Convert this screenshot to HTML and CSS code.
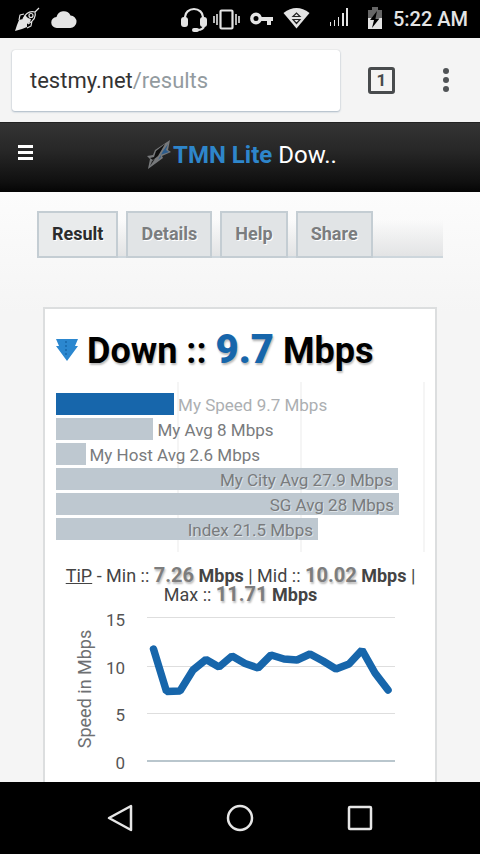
FILE: index.html
```html
<!DOCTYPE html>
<html lang="en">
<head>
<meta charset="utf-8">
<meta name="viewport" content="width=device-width, initial-scale=1">
<title>TMN Lite Download Result</title>
<link rel="stylesheet" href="styles.css">
</head>
<body>
<div class="status">
  <svg class="status-left" width="80" height="38" viewBox="0 0 80 38" aria-hidden="true">
    <g fill="none" stroke="#e4e4e4" stroke-width="1.200" stroke-linejoin="round">
      <path d="M39 8 L35 12 Q27 10 23 19 M35 12 Q37 19 28 24 M24 14 L20 15 L19 20 M32 21 L31 26 L27 28"/>
      <circle cx="31" cy="15.500" r="2"/>
    </g>
    <path fill="#e4e4e4" d="M25 15 L28 18 L31 19 L30 22 L27 24 L27 27 L22 29 L15 31 L17 25 L19 20 L23 19 Z"/>
    <path fill="#e4e4e4" d="M57 28 a5.500 5.500 0 0 1 -0.500 -11 a7.500 7.500 0 0 1 14 -1.500 a6 6 0 0 1 -0.500 12.500 Z"/>
  </svg>
  <svg class="status-right" width="202" height="38" viewBox="183 0 202 38" aria-hidden="true">
    <g fill="none" stroke="#e4e4e4" stroke-width="2.200">
      <path d="M187 19 v-2 a9 8 0 0 1 18 0 v2 M206 25 q0 5 -7 5"/>
      <rect x="222.500" y="10.500" width="12" height="18" rx="1"/>
      <path d="M219 14 v11 M238 14 v11" stroke-width="1.600"/>
      <path d="M216 16 v7 M241 16 v7" stroke-width="1.600"/>
      <circle cx="258" cy="18.500" r="4.200" stroke-width="3.400"/>
    </g>
    <g fill="#e4e4e4">
      <rect x="183" y="17" width="7" height="10" rx="3"/>
      <rect x="202" y="17" width="7" height="10" rx="3"/>
      <rect x="194" y="28" width="7" height="4" rx="2"/>
      <path d="M262 17 h13 v4 h-2 v4 h-4 v-4 h-7 Z"/>
      <path d="M285.500 13 Q298.500 3 311.500 13 L298.500 28.500 Z"/>
      <path d="M332 22 h1 v4 h-1z M336 20 h1 v6 h-1z M340 17 h1 v9 h-1z M344 13 h2 v13 h-2z M348 8 h2 v18 h-2z"/>
      <path d="M370 18 h14 v11 h-14z"/>
    </g>
    <path d="M295 16.500 L298.500 13 L302 16.500 Z M295 19.500 H302 L298.500 23.500 Z" fill="none" stroke="#222" stroke-width="1.200"/>
    <path d="M370 10 h4 v-3 h6 v3 h4 v8 h-14z" fill="#666"/>
    <path d="M379 11 L372 20 H376 L374 28 L381.500 18.500 H377.500 Z" fill="#000"/>
  </svg>
  <span class="clock">5:22 AM</span>
</div>

<div class="browser">
  <label class="address"><span class="domain">testmy.net</span><span class="path">/results</span></label>
  <button class="tab-count" type="button" aria-label="Open tabs">1</button>
  <button class="more" type="button" aria-label="More options"><i></i><i></i><i></i></button>
</div>

<header class="site-header">
  <button class="menu" type="button" aria-label="Menu"><i></i><i></i><i></i></button>
  <h1 class="brand">
    <svg width="28" height="34" viewBox="0 0 28 34" aria-hidden="true">
      <path d="M25 2 L10 12 L8 17 L2 18 L5 21 L3 31 L18 20 L17 18 L26 14 L23 12 Z" fill="#77797b"/>
      <path d="M20 6 L11 13 L9 19 L5 20 L8 22 L13 18 Z" fill="#111"/>
      <path d="M23 6 L18 13 L13 22 L16 19 L15 17 L24 14 L21 12 Z" fill="#2c5c8c"/>
      <path d="M7 23 L10 21 L5 28 Z" fill="#222"/>
    </svg><b>TMN Lite</b><span>Dow..</span>
  </h1>
</header>

<main class="page">
  <nav class="tabs">
    <a class="tab active" href="#result">Result</a>
    <a class="tab" href="#details">Details</a>
    <a class="tab" href="#help">Help</a>
    <a class="tab" href="#share">Share</a>
  </nav>

  <section class="card" id="result">
    <h2 class="headline">
      <svg width="22" height="24" viewBox="0 0 22 24" aria-hidden="true">
        <path d="M0 1 H22 L19 8 H22 L11 23 L0 8 H3 Z" fill="#2b87cf"/>
        <path d="M10 3 v14" stroke="#1768ab" stroke-width="1.500" stroke-dasharray="2 2"/>
      </svg>
      <span>Down :: <strong>9.7</strong> Mbps</span>
    </h2>

    <div class="bars">
      <div class="row"><div class="bar mine" style="width:32%"></div><span class="mine-label">My Speed 9.7 Mbps</span></div>
      <div class="row"><div class="bar" style="width:26.4%"></div><span>My Avg 8 Mbps</span></div>
      <div class="row"><div class="bar" style="width:8%"></div><span>My Host Avg 2.6 Mbps</span></div>
      <div class="row"><div class="bar" style="width:92.6%"><span>My City Avg 27.9 Mbps</span></div></div>
      <div class="row"><div class="bar" style="width:93%"><span>SG Avg 28 Mbps</span></div></div>
      <div class="row"><div class="bar" style="width:71%"><span>Index 21.5 Mbps</span></div></div>
    </div>

    <p class="tip"><u>TiP</u> - Min :: <em>7.26</em> <b>Mbps</b> | Mid :: <em>10.02</em> <b>Mbps</b> | Max :: <em>11.71</em> <b>Mbps</b></p>

    <svg class="chart" viewBox="56 604 369 190" role="img" aria-label="Speed in Mbps over time">
      <path d="M147 617.500 H395 M147 666.500 H395 M147 713.500 H395" stroke="#dedede"/>
      <path d="M147 761 H395" stroke="#b9c6cd" stroke-width="2"/>
      <g class="axis">
        <text x="125" y="626">15</text>
        <text x="125" y="674">10</text>
        <text x="125" y="721">5</text>
        <text x="125" y="769">0</text>
      </g>
      <text class="axis-title" transform="translate(91 689) rotate(-90)">Speed in Mbps</text>
      <polyline points="153.500,649 166.500,691.500 180,691 193,670 206,659.500 219,667 232,656 245,663.500 258,668 271,655 284,659 297,660 310,654 323,661 336,669 349,664 362,650 375,673 388,690" fill="none" stroke="#1766ab" stroke-width="7.500" stroke-linecap="round" stroke-linejoin="bevel"/>
    </svg>
  </section>
</main>

<nav class="system-nav">
  <button type="button" aria-label="Back"><svg width="30" height="30" viewBox="0 0 30 30"><path d="M26 3 V27 L4 15 Z"/></svg></button>
  <button type="button" aria-label="Home"><svg width="30" height="30" viewBox="0 0 30 30"><circle cx="15" cy="15" r="12"/></svg></button>
  <button type="button" aria-label="Recent apps"><svg width="30" height="30" viewBox="0 0 30 30"><rect x="4" y="4" width="22" height="22" rx="1"/></svg></button>
</nav>
</body>
</html>
```

FILE: styles.css
```css
* { box-sizing: border-box; }

body {
  margin: 0;
  height: 100vh;
  display: flex;
  flex-direction: column;
  overflow: hidden;
  background: #f5f5f5;
  font-family: Roboto, "Liberation Sans", sans-serif;
  color: #444;
}

button {
  padding: 0;
  border: 0;
  background: none;
  font-family: inherit;
}

/* Status bar */
.status {
  flex: none;
  display: flex;
  align-items: center;
  height: 38px;
  padding-right: 12px;
  background: #000;
  color: #e4e4e4;
}
.status-right { margin-left: auto; }
.clock {
  margin-left: 10px;
  font-size: 20px;
  font-weight: 500;
}

/* Browser toolbar */
.browser {
  flex: none;
  display: flex;
  align-items: center;
  height: 84px;
  padding: 0 22px 0 12px;
  background: #f4f4f4;
}
.address {
  flex: 1;
  height: 61px;
  padding: 0 18px;
  border-radius: 3px;
  background: #fff;
  box-shadow: 0 1px 2px #a9b7c5, 0 0 1px #bbb;
  font-size: 22px;
  line-height: 61px;
}
.domain { color: #333; }
.path { color: #939b9f; }
.tab-count {
  width: 27px;
  height: 27px;
  margin: 0 39px 0 28px;
  border: 3px solid #484b4d;
  border-radius: 3px;
  color: #484b4d;
  font-size: 17px;
  font-weight: 700;
  line-height: 20px;
}
.more {
  display: grid;
  gap: 3px;
  width: 24px;
  justify-items: center;
}
.more i {
  width: 6px;
  height: 6px;
  border-radius: 50%;
  background: #505356;
}

/* Site header */
.site-header {
  flex: none;
  display: grid;
  grid-template-columns: 17px 1fr 15px;
  align-items: center;
  height: 70px;
  padding: 0 16px 6px;
  border-top: 1px solid #222;
  background: linear-gradient(#343434, #272727 40%, #101010 85%, #050505);
}
.menu {
  display: grid;
  gap: 3px;
  width: 15px;
  margin: 0 0 4px 2px;
}
.menu i { height: 3px; background: #fff; }
.brand {
  display: flex;
  align-items: center;
  justify-content: center;
  margin: 0;
  font-size: 24px;
  font-weight: 400;
  color: #fff;
}
.brand b { font-weight: 700; color: #2e86cb; }
.brand span { margin-left: 6px; }

/* Page */
.page {
  flex: 1;
  min-height: 0;
  overflow: hidden;
  padding: 19px 37px 0;
  background: linear-gradient(#fcfcfc, #f5f5f5 120px);
}
.tabs {
  display: flex;
  gap: 8px;
  border-bottom: 2px solid #cdd6dc;
  background: linear-gradient(transparent 20%, #e3e4e5);
}
.tab {
  height: 47px;
  margin-bottom: -2px;
  padding: 0 13px;
  border: 2px solid #c4cdd3;
  background: #e1e4e6;
  color: #7b7d7f;
  font-size: 18px;
  font-weight: 700;
  line-height: 42px;
  text-decoration: none;
  text-shadow: 1px 1px 0 #fff;
}
.tab.active { background: #e9ebec; color: #2b2c2d; }

.card {
  margin: 49px 6px 0;
  padding: 19px 10px 0 11px;
  border: 2px solid #dcdedf;
  background: #fff;
}
.headline {
  display: flex;
  align-items: center;
  gap: 9px;
  height: 44px;
  margin: 0;
  color: #000;
  font-size: 36px;
  font-weight: 700;
  line-height: 44px;
  white-space: nowrap;
  text-shadow: 1px 2px 2px #bbb;
}
.headline strong { color: #1766ab; font-size: 40px; }

/* Comparison bars: the full width stands for 30 Mbps */
.bars {
  display: grid;
  gap: 3px;
  margin-top: 10px;
  padding: 11px 0 12px;
  background: repeating-linear-gradient(90deg, transparent 0 calc(33.333% - 2px), #f5f5f5 calc(33.333% - 2px) 33.333%);
  font-size: 17px;
  color: #797b7d;
}
.row { display: flex; height: 22px; line-height: 24px; white-space: nowrap; }
.row > span { margin-left: 4px; }
.bar { background: #bec8d0; text-align: right; }
.bar span { margin-right: 5px; text-shadow: 1px 1px 0 #dde3e7; }
.bar.mine { background: #1766ab; }
.row .mine-label { color: #acafb2; }

.tip {
  margin: 14px 0 0;
  color: #444;
  font-size: 18px;
  line-height: 18px;
  text-align: center;
}
.tip em {
  color: #7d7d7d;
  font-size: 20px;
  font-style: normal;
  font-weight: 700;
  text-shadow: 1px 2px 2px #bbb;
}

.chart { display: block; width: 100%; }
.chart text { fill: #6e7072; font-size: 17px; }
.chart .axis text { text-anchor: end; fill: #555; }
.chart .axis-title { text-anchor: middle; font-size: 18px; }

/* System navigation */
.system-nav {
  flex: none;
  display: flex;
  justify-content: center;
  gap: 90px;
  height: 72px;
  background: #000;
}
.system-nav svg {
  display: block;
  fill: none;
  stroke: #e6e6e6;
  stroke-width: 2.5;
  stroke-linejoin: round;
}
```
